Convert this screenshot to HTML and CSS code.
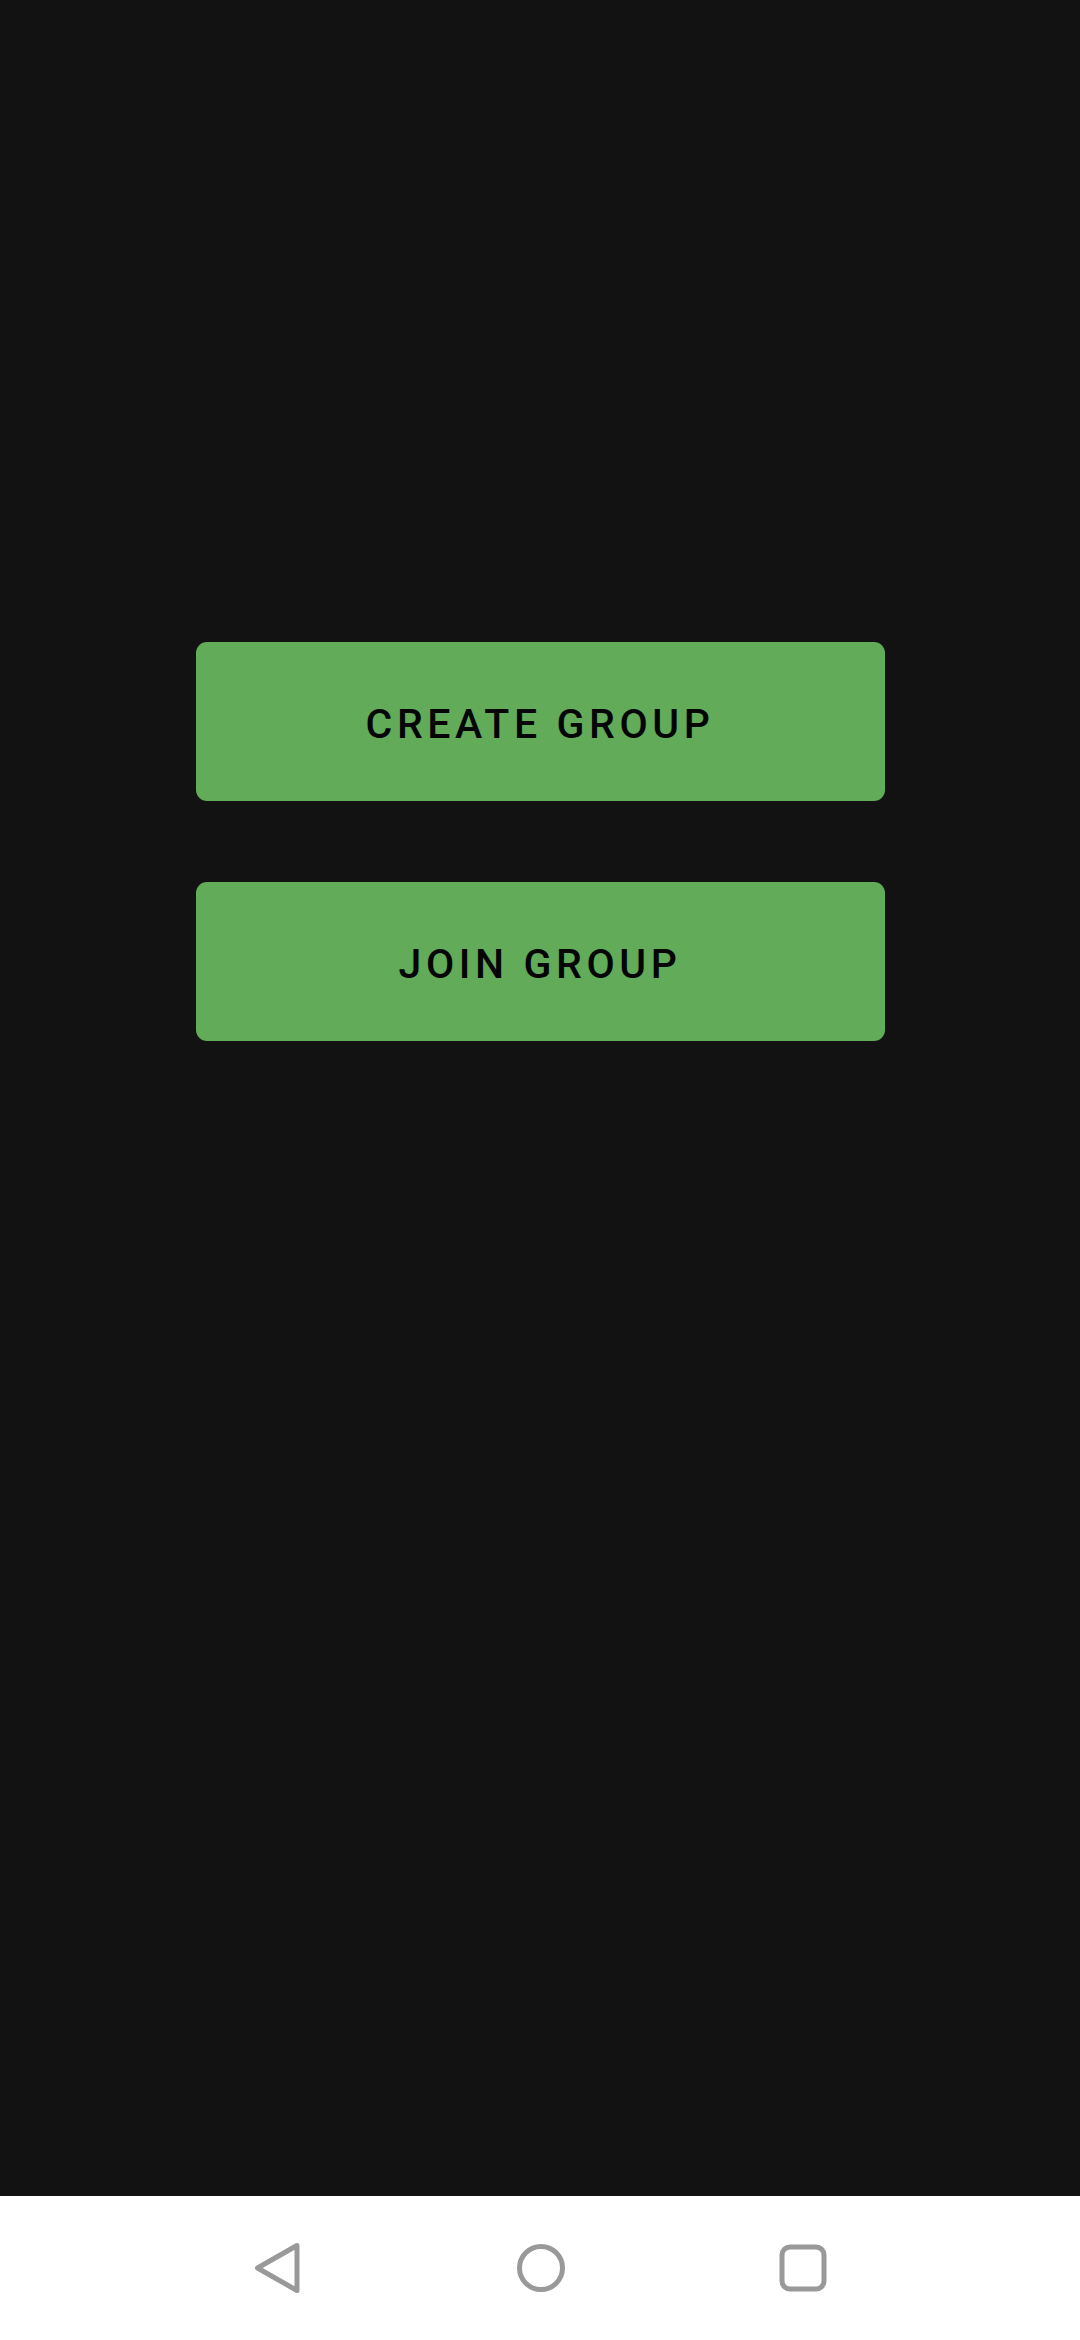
FILE: index.html
```html
<!DOCTYPE html>
<html>
<head>
<meta charset="utf-8">
<link rel="stylesheet" href="styles.css">
</head>
<body>
<div class="screen">
  <main class="content">
    <button class="action">CREATE GROUP</button>
    <button class="action">JOIN GROUP</button>
  </main>
  <nav class="navbar">
    <span class="nav-item back">
      <svg width="48" height="52" viewBox="0 0 48 52"><path d="M43 3.5 L43 48.5 L3.5 26 Z" fill="none" stroke="#999" stroke-width="5" stroke-linejoin="round"/></svg>
    </span>
    <span class="nav-item home">
      <svg width="50" height="50" viewBox="0 0 50 50"><circle cx="25" cy="25" r="21.5" fill="none" stroke="#999" stroke-width="5"/></svg>
    </span>
    <span class="nav-item recent">
      <svg width="48" height="48" viewBox="0 0 48 48"><rect x="3" y="3" width="42" height="42" rx="8" fill="none" stroke="#999" stroke-width="5"/></svg>
    </span>
  </nav>
</div>
</body>
</html>
```
FILE: styles.css
```css
html, body {
  margin: 0;
  padding: 0;
  background: #121212;
}
.screen {
  width: 1080px;
  height: 2340px;
  display: flex;
  flex-direction: column;
}
.content {
  flex: 1;
  display: flex;
  flex-direction: column;
  align-items: center;
  gap: 81px;
  padding-top: 642px;
  box-sizing: border-box;
}
.action {
  width: 689px;
  height: 159px;
  border: none;
  border-radius: 11px;
  background: #61ab59;
  color: #050505;
  font-family: Roboto, "Liberation Sans", sans-serif;
  font-weight: 500;
  font-size: 41px;
  letter-spacing: 4.6px;
  padding: 4px 0 0 0;
}
.navbar {
  height: 144px;
  background: #ffffff;
  display: flex;
  align-items: center;
  justify-content: center;
  padding-left: 4px;
}
.nav-item {
  display: flex;
  align-items: center;
  justify-content: center;
  width: 50px;
}
.nav-item svg { display: block; }
.back { margin-right: 213px; margin-left: -3px; }
.recent { margin-left: 212px; }
```
